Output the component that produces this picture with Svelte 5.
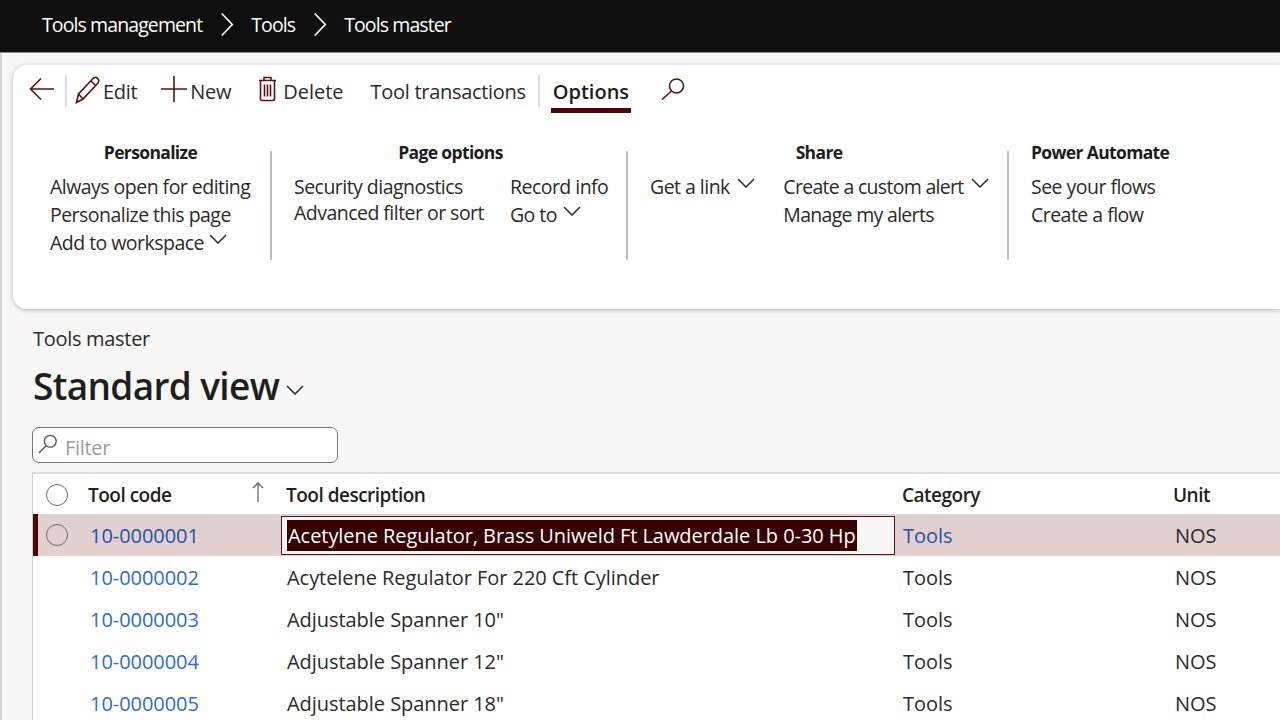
<script>
	const rows = [
		{ code: '10-0000001', desc: 'Acetylene Regulator, Brass Uniweld Ft Lawderdale Lb 0-30 Hp', selected: true },
		{ code: '10-0000002', desc: 'Acytelene Regulator For 220 Cft Cylinder' },
		{ code: '10-0000003', desc: 'Adjustable Spanner 10"' },
		{ code: '10-0000004', desc: 'Adjustable Spanner 12"' },
		{ code: '10-0000005', desc: 'Adjustable Spanner 18"' }
	];
</script>

{#snippet chevron()}
	<svg class="chevron" viewBox="0 0 18 10" aria-hidden="true"><path d="M1 1l8 8 8-8" /></svg>
{/snippet}

<div class="page">
	<header class="topbar">
		<span>Tools management</span>
		<svg class="crumb" viewBox="0 0 14 26" aria-hidden="true"><path d="M1.5 1.5L12.5 13 1.5 24.5" /></svg>
		<span>Tools</span>
		<svg class="crumb" viewBox="0 0 14 26" aria-hidden="true"><path d="M1.5 1.5L12.5 13 1.5 24.5" /></svg>
		<span>Tools master</span>
	</header>

	<section class="card">
		<div class="toolbar">
			<svg class="icon back" viewBox="0 0 26 24" aria-hidden="true"><path d="M25 12H1.5M12 1.5L1.5 12 12 22.5" /></svg>
			<span class="sep first"></span>
			<svg class="icon pencil" viewBox="0 0 25 28" aria-hidden="true">
				<path d="M1.5 26.5l2-8.5L18 2.5c1.5-1.5 3.5-1.5 4.8 0s1.200 3.500-.3 5L8 23z" />
				<path d="M3.500 18L8 23M16 5l5 5" />
			</svg>
			<span class="label edit">Edit</span>
			<svg class="icon plus" viewBox="0 0 26 26" aria-hidden="true"><path d="M13 0v26M0 13h26" /></svg>
			<span class="label new">New</span>
			<svg class="icon trash" viewBox="0 0 19 26" aria-hidden="true">
				<path d="M1 4.500h17M6 4.500V1.500h7v3M2.500 4.500v18.500a1.500 1.500 0 0 0 1.500 1.500h11a1.500 1.500 0 0 0 1.500-1.500V4.500M6.500 8.500v12M9.500 8.500v12M12.500 8.500v12" />
			</svg>
			<span class="label delete">Delete</span>
			<span class="label transactions">Tool transactions</span>
			<span class="sep second"></span>
			<span class="tab">Options</span>
			<svg class="icon search" viewBox="0 0 24 22" aria-hidden="true">
				<circle cx="15.500" cy="8" r="7" /><path d="M10.500 13L1 21.500" />
			</svg>
		</div>

		<div class="groups">
			<div class="group personalize">
				<h3>Personalize</h3>
				<div class="items">
					<span>Always open for editing</span>
					<span>Personalize this page</span>
					<span>Add to workspace {@render chevron()}</span>
				</div>
			</div>
			<span class="divider d1"></span>
			<div class="group pageopts">
				<h3>Page options</h3>
				<div class="cols">
					<div class="items tight">
						<span>Security diagnostics</span>
						<span>Advanced filter or sort</span>
					</div>
					<div class="items">
						<span>Record info</span>
						<span>Go to {@render chevron()}</span>
					</div>
				</div>
			</div>
			<span class="divider d2"></span>
			<div class="group share">
				<h3>Share</h3>
				<div class="cols">
					<div class="items">
						<span>Get a link {@render chevron()}</span>
					</div>
					<div class="items narrow">
						<span>Create a custom alert {@render chevron()}</span>
						<span>Manage my alerts</span>
					</div>
				</div>
			</div>
			<span class="divider d3"></span>
			<div class="group flows">
				<h3>Power Automate</h3>
				<div class="items">
					<span>See your flows</span>
					<span>Create a flow</span>
				</div>
			</div>
		</div>
	</section>

	<main class="content">
		<div class="crumbtitle">Tools master</div>
		<div class="viewname">
			<h1>Standard view</h1>
			<svg class="viewchev" viewBox="0 0 18 10" aria-hidden="true"><path d="M1 1l8 8 8-8" /></svg>
		</div>
		<div class="filter">
			<svg class="filter-icon" viewBox="0 0 22 22" aria-hidden="true">
				<circle cx="13.500" cy="8" r="6.500" /><path d="M9 13L1 21" />
			</svg>
			<span class="placeholder">Filter</span>
		</div>

		<div class="grid">
			<div class="row head">
				<div class="cell first">
					<span class="radio"></span>
					<span class="code-head">Tool code</span>
					<svg class="sort" viewBox="0 0 12 20" aria-hidden="true"><path d="M6 20V1M1 6l5-5 5 5" /></svg>
				</div>
				<div class="cell">Tool description</div>
				<div class="cell">Category</div>
				<div class="cell">Unit</div>
			</div>
			{#each rows as row}
				<div class="row" class:selected={row.selected}>
					<div class="cell first">
						{#if row.selected}<span class="radio"></span>{/if}
						<a class="code" href="#top">{row.code}</a>
					</div>
					<div class="cell" class:editing={row.selected}>
						{#if row.selected}<mark>{row.desc}</mark>{:else}{row.desc}{/if}
					</div>
					<div class="cell">
						{#if row.selected}<a class="cat" href="#top">Tools</a>{:else}Tools{/if}
					</div>
					<div class="cell">NOS</div>
				</div>
			{/each}
		</div>
	</main>
</div>

<style>
	:global(body) {
		margin: 0;
		background: #f8f7f6;
	}

	.page {
		width: 1280px;
		height: 720px;
		overflow: hidden;
		background: #f8f7f6;
		box-shadow: inset 2px 0 0 #d6d5d3;
		font-family: 'Open Sans', 'Noto Sans', sans-serif;
		font-size: 20px;
		letter-spacing: -0.3px;
		color: #2a2a2a;
	}

	.topbar {
		height: 48px;
		padding: 0 0 4px 42px;
		display: flex;
		align-items: center;
		gap: 17.500px;
		background: #111010;
		border-bottom: 1px solid #8c8c8c;
		color: #fff;
		font-size: 19.500px;
		letter-spacing: -0.9px;
	}

	.crumb {
		width: 14px;
		height: 25px;
		fill: none;
		stroke: #fff;
		stroke-width: 1.700;
	}

	.card {
		margin: 12px 0 0 13px;
		height: 244px;
		background: #fff;
		border-radius: 14px 0 0 14px;
		box-shadow: 0 1px 5px rgba(0, 0, 0, 0.28);
	}

	.toolbar {
		height: 52px;
		margin-bottom: 26px;
		padding-left: 16px;
		display: flex;
		align-items: center;
	}

	.icon {
		flex: none;
		fill: none;
		stroke: #5c1216;
		stroke-width: 1.600;
	}

	.back {
		width: 26px;
		height: 24px;
		margin-bottom: 4px;
	}

	.sep {
		width: 2px;
		height: 32px;
		background: #dcdcdc;
	}

	.sep.first {
		margin: 0 8px 0 10px;
	}

	.pencil {
		width: 25px;
		height: 28px;
		margin-bottom: 2px;
	}

	.edit {
		margin-left: 3px;
	}

	.plus {
		width: 26px;
		height: 26px;
		margin-left: 24px;
		margin-bottom: 4px;
	}

	.new {
		margin-left: 3px;
	}

	.trash {
		width: 19px;
		height: 26px;
		margin-left: 27px;
		margin-bottom: 4px;
	}

	.delete {
		margin-left: 6px;
		letter-spacing: 0;
	}

	.transactions {
		margin-left: 27px;
	}

	.sep.second {
		margin: 0 13px 0 12px;
	}

	.tab {
		position: relative;
		font-weight: 600;
		letter-spacing: 0;
		color: #1c1c1c;
	}

	/* underline of the active ribbon tab */
	.tab::after {
		content: '';
		position: absolute;
		left: -2px;
		right: -2px;
		top: 30px;
		height: 5px;
		background: #4c0408;
	}

	.search {
		width: 24px;
		height: 22px;
		margin-left: 32px;
		margin-bottom: 4px;
	}

	.groups {
		display: flex;
		align-items: flex-start;
		padding-left: 37px;
	}

	.group h3 {
		margin: 0 0 12px;
		height: 18px;
		line-height: 18px;
		font-size: 17.500px;
		font-weight: 700;
		letter-spacing: -0.65px;
		text-align: center;
		color: #1c1c1c;
	}

	.items {
		display: flex;
		flex-direction: column;
		font-size: 19.500px;
		letter-spacing: -0.53px;
		line-height: 28px;
		white-space: nowrap;
	}

	.items.tight {
		padding-top: 1px;
		line-height: 26px;
	}

	.items.narrow {
		letter-spacing: -0.7px;
	}

	.cols {
		display: flex;
	}

	.chevron {
		width: 18px;
		height: 10px;
		margin-left: 1px;
		vertical-align: 6px;
		fill: none;
		stroke: #2a2a2a;
		stroke-width: 1.500;
	}

	.share .chevron {
		margin-left: 3px;
	}

	.divider {
		flex: none;
		width: 2px;
		height: 109px;
		margin-top: 8px;
		background: #c4bcbc;
	}

	.personalize {
		width: 201px;
	}

	.d1 {
		margin-left: 19px;
	}

	.pageopts {
		width: 313px;
		margin-left: 22px;
	}

	.pageopts .cols {
		gap: 26px;
	}

	.d2 {
		margin-left: 19px;
	}

	.share {
		width: 338px;
		margin-left: 22px;
	}

	.share .cols {
		gap: 28px;
	}

	.d3 {
		margin-left: 19px;
	}

	.flows {
		margin-left: 22px;
	}

	.flows h3 {
		text-align: left;
	}

	.content {
		padding: 16px 0 0 33px;
	}

	.crumbtitle {
		height: 28px;
		line-height: 28px;
	}

	.viewname {
		display: flex;
		align-items: center;
		height: 52px;
		margin-top: 6px;
	}

	h1 {
		margin: 0;
		font-size: 37px;
		font-weight: 600;
		letter-spacing: -0.65px;
		color: #1f1f1f;
	}

	.viewchev {
		width: 18px;
		height: 10px;
		margin: 10px 0 0 7px;
		fill: none;
		stroke: #2a2a2a;
		stroke-width: 1.500;
	}

	.filter {
		width: 306px;
		height: 36px;
		margin: 16px 0 9px -1px;
		padding-left: 5px;
		box-sizing: border-box;
		display: flex;
		align-items: center;
		gap: 7px;
		background: #fff;
		border: 1.500px solid #757575;
		border-radius: 7px;
		color: #9a9a9a;
	}

	.placeholder {
		margin-top: 4px;
	}

	.filter-icon {
		width: 20px;
		height: 20px;
		margin-bottom: 3px;
		fill: none;
		stroke: #555;
		stroke-width: 1.500;
	}

	.grid {
		background: #fff;
		border-top: 2px solid #dedede;
		border-left: 1px solid #cfcfcf;
		margin-left: -1px;
		letter-spacing: -0.05px;
	}

	.row {
		display: grid;
		grid-template-columns: 248px 614px 272px 1fr;
		height: 42px;
		align-items: center;
	}

	.row.head {
		height: 40px;
		padding-top: 2px;
		box-sizing: border-box;
		font-weight: 600;
		color: #1f1f1f;
		font-size: 19px;
		letter-spacing: -0.5px;
	}

	.cell {
		white-space: nowrap;
	}

	.row:not(.head) .cell {
		padding-left: 6px;
	}

	.row:not(.head) .cell:nth-child(3),
	.row:not(.head) .cell:nth-child(4) {
		padding-left: 8px;
	}

	.row .cell.first {
		position: relative;
		height: 100%;
		display: flex;
		align-items: center;
		padding-left: 57px;
	}

	.row.head .cell.first {
		padding-left: 55px;
	}

	.row.head .cell:not(.first) {
		padding-left: 5px;
	}

	.row.head .cell:nth-child(3) {
		padding-left: 7px;
	}

	.row.head .cell:nth-child(4) {
		padding-left: 6px;
	}

	.radio {
		position: absolute;
		left: 13px;
		top: 50%;
		margin-top: -11px;
		width: 22px;
		height: 22px;
		box-sizing: border-box;
		border: 1.500px solid #6b6b6b;
		border-radius: 50%;
	}

	.sort {
		position: absolute;
		left: 219px;
		top: 6px;
		width: 12px;
		height: 20px;
		fill: none;
		stroke: #666;
		stroke-width: 1.300;
	}

	.code {
		color: #2f6bc8;
		text-decoration: none;
	}

	.selected {
		background: #e0d0d0;
		box-shadow: inset 5px 0 0 #4c0408;
	}

	.selected .code,
	.cat {
		color: #2b4fa3;
		text-decoration: none;
	}

	.row .cell.editing {
		height: 39px;
		box-sizing: border-box;
		padding: 3px 0 0 5px;
		background: #fbf7f6;
		border: 1px solid #5c1216;
		display: flex;
		align-items: flex-start;
	}

	mark {
		background: #360000;
		color: #fff;
		height: 31px;
		line-height: 31px;
		padding: 0 1px;
	}
</style>
